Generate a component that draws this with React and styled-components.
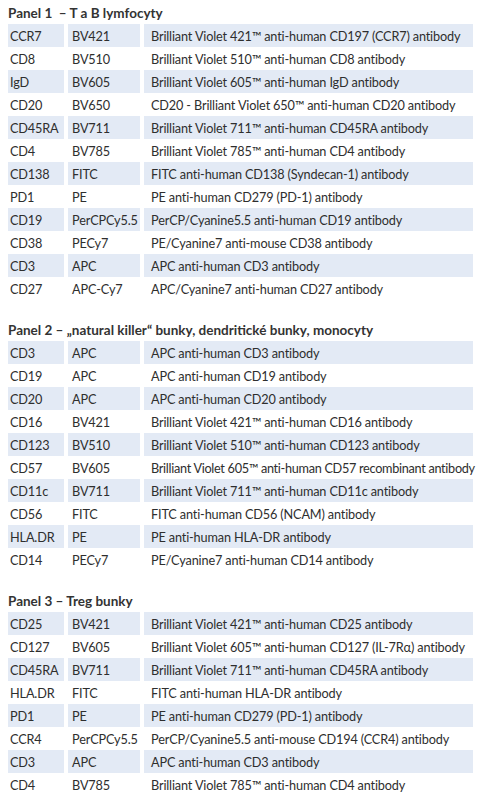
import React from 'react'
import styled, { createGlobalStyle } from 'styled-components'

const GlobalStyle = createGlobalStyle`
  body {
    margin: 0;
    background: #fff;
    font-family: Lato, 'Open Sans', sans-serif;
    color: #2e2e2e;
  }
`

const Page = styled.div`
  width: 465px;
  padding: 4px 0 0 8px;
`

const Panel = styled.section`
  & + & {
    margin-top: 21px;
  }
`

const Title = styled.h2`
  margin: 0;
  height: 20px;
  line-height: 19px;
  font-size: 13.5px;
  font-weight: 700;
  color: #333;
  white-space: pre;
`

const Row = styled.div`
  display: grid;
  grid-template-columns: 56px 72px 1fr;
  column-gap: 4px;
  height: 23px;
`

const Cell = styled.div`
  display: flex;
  align-items: center;
  padding-left: ${(p) => p.$pad}px;
  background: ${(p) => (p.$shaded ? '#e3eaf5' : 'transparent')};
  font-size: 12.7px;
  letter-spacing: ${(p) => (p.$tight ? '-0.3px' : '-0.15px')};
  white-space: nowrap;
`

const panels = [
  {
    title: 'Panel 1  – T a B lymfocyty',
    rows: [
      ['CCR7', 'BV421', 'Brilliant Violet 421™ anti-human CD197 (CCR7) antibody'],
      ['CD8', 'BV510', 'Brilliant Violet 510™ anti-human CD8 antibody'],
      ['IgD', 'BV605', 'Brilliant Violet 605™ anti-human IgD antibody'],
      ['CD20', 'BV650', 'CD20 - Brilliant Violet 650™ anti-human CD20 antibody'],
      ['CD45RA', 'BV711', 'Brilliant Violet 711™ anti-human CD45RA antibody'],
      ['CD4', 'BV785', 'Brilliant Violet 785™ anti-human CD4 antibody'],
      ['CD138', 'FITC', 'FITC anti-human CD138 (Syndecan-1) antibody'],
      ['PD1', 'PE', 'PE anti-human CD279 (PD-1) antibody'],
      ['CD19', 'PerCPCy5.5', 'PerCP/Cyanine5.5 anti-human CD19 antibody'],
      ['CD38', 'PECy7', 'PE/Cyanine7 anti-mouse CD38 antibody'],
      ['CD3', 'APC', 'APC anti-human CD3 antibody'],
      ['CD27', 'APC-Cy7', 'APC/Cyanine7 anti-human CD27 antibody'],
    ],
  },
  {
    title: 'Panel 2 – „natural killer“ bunky, dendritické bunky, monocyty',
    rows: [
      ['CD3', 'APC', 'APC anti-human CD3 antibody'],
      ['CD19', 'APC', 'APC anti-human CD19 antibody'],
      ['CD20', 'APC', 'APC anti-human CD20 antibody'],
      ['CD16', 'BV421', 'Brilliant Violet 421™ anti-human CD16 antibody'],
      ['CD123', 'BV510', 'Brilliant Violet 510™ anti-human  CD123 antibody'],
      ['CD57', 'BV605', 'Brilliant Violet 605™ anti-human CD57 recombinant antibody'],
      ['CD11c', 'BV711', 'Brilliant Violet 711™ anti-human CD11c antibody'],
      ['CD56', 'FITC', 'FITC anti-human CD56 (NCAM) antibody'],
      ['HLA.DR', 'PE', 'PE anti-human HLA-DR antibody'],
      ['CD14', 'PECy7', 'PE/Cyanine7 anti-human CD14 antibody'],
    ],
  },
  {
    title: 'Panel 3 – Treg bunky',
    rows: [
      ['CD25', 'BV421', 'Brilliant Violet 421™ anti-human CD25 antibody'],
      ['CD127', 'BV605', 'Brilliant Violet 605™ anti-human CD127 (IL-7Rα) antibody'],
      ['CD45RA', 'BV711', 'Brilliant Violet 711™ anti-human CD45RA antibody'],
      ['HLA.DR', 'FITC', 'FITC anti-human HLA-DR antibody'],
      ['PD1', 'PE', 'PE anti-human CD279 (PD-1) antibody'],
      ['CCR4', 'PerCPCy5.5', 'PerCP/Cyanine5.5 anti-mouse CD194 (CCR4) antibody'],
      ['CD3', 'APC', 'APC anti-human CD3 antibody'],
      ['CD4', 'BV785', 'Brilliant Violet 785™ anti-human CD4 antibody'],
    ],
  },
]

const pads = [2, 4, 7]

export default function App() {
  return (
    <Page>
      <GlobalStyle />
      {panels.map((panel) => (
        <Panel key={panel.title}>
          <Title>{panel.title}</Title>
          {panel.rows.map((row, i) => (
            <Row key={row[0] + i}>
              {row.map((text, c) => (
                <Cell
                  key={c}
                  $pad={pads[c]}
                  $shaded={i % 2 === 0}
                  $tight={text.length > 56}
                >
                  {text}
                </Cell>
              ))}
            </Row>
          ))}
        </Panel>
      ))}
    </Page>
  )
}
